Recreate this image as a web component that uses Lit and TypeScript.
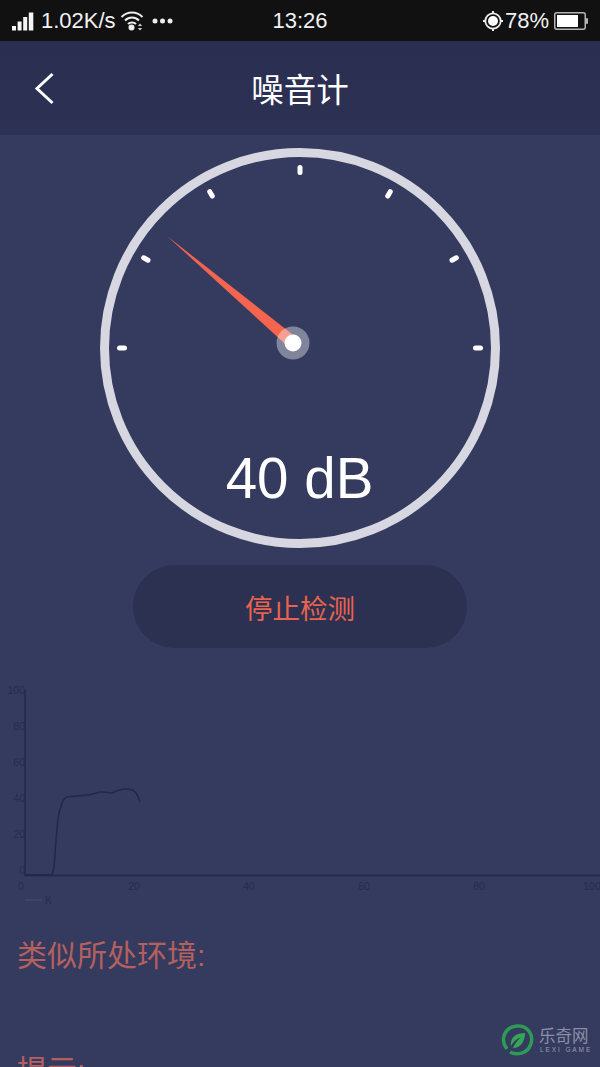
import { LitElement, html, css, svg } from "lit";
import { customElement } from "lit/decorators.js";

const ticks = [-90, -60, -30, 0, 30, 60, 90];

@customElement("app-root")
export class AppRoot extends LitElement {
  static styles = css`
    :host { display: block; width: 600px; height: 1067px; overflow: hidden; background: #353b5e; font-family: "Liberation Sans", "Noto Sans CJK SC", sans-serif; }
    .status { height: 41px; background: #111112; color: #f2f2f2; display: grid; grid-template-columns: 1fr auto 1fr; align-items: center; font-size: 22px; padding: 0 12px; box-sizing: border-box; }
    .left, .right { display: flex; align-items: center; }
    .left { gap: 5px; }
    .right { justify-content: flex-end; gap: 2px; }
    .status svg { display: block; }
    .wifi { margin-left: -1px; }
    .dots { margin-left: 2px; }
    .battery { margin-left: 3px; }
    .header { height: 94px; background: linear-gradient(#2a2e50, #2d3154); display: flex; align-items: center; justify-content: center; position: relative; color: #fff; font-size: 32.5px; padding-bottom: 2px; box-sizing: border-box; }
    .back { position: absolute; left: 33px; top: 31px; }
    .gauge { display: block; margin: 13px auto 0; }
    .btn { width: 334px; height: 83px; border-radius: 42px; background: #2c3051; margin: 17px auto 0; display: flex; align-items: center; justify-content: center; color: #e8644f; font-size: 27.5px; }
    .chart { display: block; margin-top: 32px; }
    .chart text { font-family: "Liberation Sans", sans-serif; font-size: 10.5px; fill: #272c4c; }
    .info { margin-top: 21px; padding-left: 17px; color: #b4605f; font-size: 30px; line-height: 40px; }
    .info div + div { margin-top: 75px; }
    .mark { position: absolute; left: 500px; top: 1022px; }
    .mark .cn { font-size: 16.5px; font-family: "Noto Sans CJK SC", sans-serif; fill: #8a8ea6; }
    .mark .en { font-size: 6.5px; letter-spacing: 1.9px; font-family: "Liberation Sans", sans-serif; fill: #9a9eb2; }
  `;

  gauge() {
    return html`<svg class="gauge" width="400" height="400" viewBox="0 0 400 400">
      <circle cx="200" cy="200" r="195.5" fill="none" stroke="#d6d7e0" stroke-width="9"></circle>
      ${ticks.map(a => svg`<line x1="200" y1="19.500" x2="200" y2="24.500" stroke="#fff" stroke-width="5" stroke-linecap="round" transform="rotate(${a} 200 200)"></line>`)}
      <polygon points="67,88 189,199.500 197,190" fill="#f4654f"></polygon>
      <circle cx="193" cy="195" r="16.500" fill="#fff" fill-opacity=".38"></circle>
      <circle cx="193" cy="195" r="8.500" fill="#fff"></circle>
      <text x="199.500" y="350" text-anchor="middle" font-family="Liberation Sans" font-size="56.500" fill="#fff">40 dB</text>
    </svg>`;
  }

  chart() {
    const ys: [string, number][] = [["100", 14], ["80", 50], ["60", 86], ["40", 122], ["20", 158], ["0", 194]];
    const xs: [string, number][] = [["0", 21], ["20", 134], ["40", 249], ["60", 364], ["80", 479], ["100", 592]];
    return html`<svg class="chart" width="600" height="235" viewBox="0 0 600 235">
      <line x1="25" y1="10" x2="25" y2="196" stroke="#23274a" stroke-width="1.300"></line>
      <line x1="25" y1="195.500" x2="600" y2="195.500" stroke="#23274a" stroke-width="1.300"></line>
      ${ys.map(([t, y]) => svg`<text x="25" y="${y}" text-anchor="end">${t}</text>`)}
      ${xs.map(([t, x]) => svg`<text x="${x}" y="210" text-anchor="middle">${t}</text>`)}
      <path d="M25 195H52L54 187C56 165 57 135 60 130C62 121 64 118 67 117C73 116 80 116 87 115C93 115 96 112 102 112C106 112 109 113 112 113C116 111 120 109 125 109C129 109 133 109 135 112C138 115 139 119 140 122" fill="none" stroke="#23274a" stroke-width="1.500"></path>
      <line x1="25" y1="220" x2="42" y2="220" stroke="#4a4f70" stroke-width="1"></line>
      <text x="45" y="224">K</text>
    </svg>`;
  }

  render() {
    return html`
      <div class="status">
        <div class="left">
          <svg width="24" height="20" viewBox="0 0 24 20"><g fill="#f5f5f5">
            <rect x="0" y="15" width="4" height="4.500"></rect><rect x="5.600" y="10.500" width="4" height="9"></rect><rect x="11.200" y="6" width="4" height="13.500"></rect><rect x="16.800" y="1.500" width="4.500" height="18"></rect></g></svg>
          <span>1.02K/s</span>
          <svg class="wifi" width="25" height="22" viewBox="0 0 25 22"><g fill="none" stroke="#eee" stroke-width="2"><path d="M1.500 7C7.500 1 16.500 1 22.500 7"></path><path d="M5 10.500C9 6.500 15 6.500 19 10.500"></path><path d="M8 14C10 12 14 12 16 14"></path></g><circle cx="11.500" cy="17.500" r="3" fill="#eee"></circle><path d="M20 13.500l2.200 2.500h-4.400zM20 20.500l2.200-2.500h-4.400z" fill="#ccc"></path></svg>
          <svg class="dots" width="22" height="6" viewBox="0 0 22 6"><g fill="#eee"><circle cx="3" cy="3" r="2.500"></circle><circle cx="10.500" cy="3" r="2.500"></circle><circle cx="18" cy="3" r="2.500"></circle></g></svg>
        </div>
        <div class="time">13:26</div>
        <div class="right">
          <svg width="20" height="22" viewBox="0 0 20 22"><circle cx="10" cy="11" r="7.700" fill="none" stroke="#eee" stroke-width="1.800"></circle><circle cx="10" cy="11" r="5" fill="#fff"></circle><path d="M10 1v3M10 18v3M0 11h3M17 11h3" stroke="#eee" stroke-width="2"></path></svg>
          <span>78%</span>
          <svg class="battery" width="34" height="18" viewBox="0 0 34 18"><rect x=".75" y=".75" width="30.500" height="16.500" rx="2" fill="none" stroke="#b5b5b5" stroke-width="1.500"></rect><rect x="3" y="3" width="21" height="12" fill="#fff"></rect><rect x="32" y="6" width="2" height="6" rx="1" fill="#b5b5b5"></rect></svg>
        </div>
      </div>
      <div class="header">
        <svg class="back" width="24" height="34" viewBox="0 0 24 34"><path d="M19.500 2L4 16.500L19.500 31" fill="none" stroke="#fff" stroke-width="3"></path></svg>
        <span>噪音计</span>
      </div>
      ${this.gauge()}
      <div class="btn">停止检测</div>
      ${this.chart()}
      <div class="info">
        <div>类似所处环境:</div>
        <div>提示:</div>
      </div>
      <svg class="mark" width="100" height="36" viewBox="0 0 100 36">
        <path d="M7 27C0 18 4 5 17 4C28 3 35 14 30 24C27 31 17 34 10 30" fill="none" stroke="#2e9a55" stroke-width="3.500"></path>
        <path d="M11 24C10 15 16 11 25 11C25 20 20 26 13 26C15 21 18 18 21 15C16 17 13 20 11 24Z" fill="#36a558"></path>
        <text class="cn" x="39" y="20">乐奇网</text>
        <text class="en" x="40" y="30">LEXI GAME</text>
      </svg>
    `;
  }
}
